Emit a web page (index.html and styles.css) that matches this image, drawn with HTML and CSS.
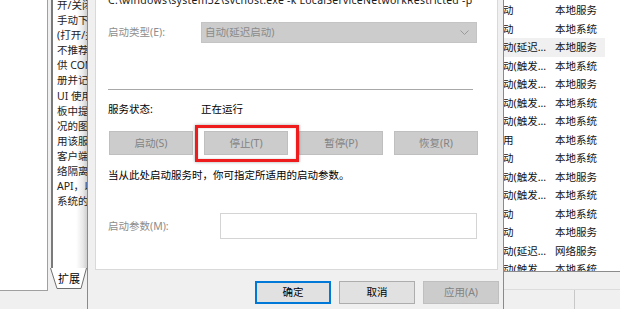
FILE: index.html
```html
<!DOCTYPE html>
<html lang="zh-CN">
<head>
<meta charset="utf-8">
<title>服务属性</title>
<link rel="stylesheet" href="styles.css">
</head>
<body>
<div class="screen">
  <div class="mmc-left">
    <div class="tree"></div>
    <div class="desc-col">
      <div class="desc">
        <div>开/关闭</div>
        <div>手动下载</div>
        <div>(打开/关</div>
        <div>不推荐</div>
        <div>供 COM</div>
        <div>册并记录</div>
        <div>UI 使用</div>
        <div>板中提示</div>
        <div>况的图标</div>
        <div>用该服务</div>
        <div>客户端</div>
        <div>络隔离</div>
        <div>API，以</div>
        <div>系统的</div>
      </div>
      <div class="tab">
        <svg class="tab-shape" width="37" height="21" viewBox="0 0 37 21"><path d="M0.5 0 L7 20.5 L31 20.5 L36.5 0" fill="#fff" stroke="#6e6e6e" stroke-width="1"/></svg>
        <span class="tab-label">扩展</span>
      </div>
    </div>
  </div>

  <div class="dialog">
    <div class="page">
      <div class="path">C:\windows\system32\svchost.exe -k LocalServiceNetworkRestricted -p</div>
      <div class="row row-type">
        <span class="label muted">启动类型(E):</span>
        <div class="combo">
          <span>自动(延迟启动)</span>
          <svg class="chev" width="9" height="5" viewBox="0 0 9 5"><path d="M0.5 0.5 L4.5 4.5 L8.5 0.5" fill="none" stroke="#9a9a9a" stroke-width="1"/></svg>
        </div>
      </div>
      <div class="sep"></div>
      <div class="row row-status">
        <span class="label">服务状态:</span>
        <span>正在运行</span>
      </div>
      <div class="svc-buttons">
        <button class="btn disabled">启动(S)</button>
        <button class="btn disabled highlight">停止(T)<span class="redbox"></span></button>
        <button class="btn disabled">暂停(P)</button>
        <button class="btn disabled">恢复(R)</button>
      </div>
      <div class="hint">当从此处启动服务时，你可指定所适用的启动参数。</div>
      <div class="row row-param">
        <span class="label label-param muted">启动参数(M):</span>
        <div class="input"></div>
      </div>
    </div>
    <div class="dlg-buttons">
      <button class="btn default">确定</button>
      <button class="btn normal">取消</button>
      <button class="btn disabled">应用(A)</button>
    </div>
  </div>

  <div class="list-area">
    <div class="list">
      <div class="lrow"><span class="c1">动</span><span class="c2">本地服务</span></div>
      <div class="lrow"><span class="c1">动</span><span class="c2">本地系统</span></div>
      <div class="lrow sel"><span class="c1">动(延迟...</span><span class="c2">本地服务</span></div>
      <div class="lrow"><span class="c1">动(触发...</span><span class="c2">本地系统</span></div>
      <div class="lrow"><span class="c1">动(触发...</span><span class="c2">本地服务</span></div>
      <div class="lrow"><span class="c1">动(触发...</span><span class="c2">本地系统</span></div>
      <div class="lrow"><span class="c1">动(触发...</span><span class="c2">本地系统</span></div>
      <div class="lrow"><span class="c1">用</span><span class="c2">本地系统</span></div>
      <div class="lrow"><span class="c1">动</span><span class="c2">本地系统</span></div>
      <div class="lrow"><span class="c1">动(触发...</span><span class="c2">本地服务</span></div>
      <div class="lrow"><span class="c1">动(触发...</span><span class="c2">本地系统</span></div>
      <div class="lrow"><span class="c1">动</span><span class="c2">本地系统</span></div>
      <div class="lrow"><span class="c1">动</span><span class="c2">本地服务</span></div>
      <div class="lrow"><span class="c1">动(延迟...</span><span class="c2">网络服务</span></div>
      <div class="lrow"><span class="c1">动(触发...</span><span class="c2">本地系统</span></div>
    </div>
    <div class="list-tabs"></div>
    <div class="status">
      <div class="status-cell"></div>
      <div class="status-cell"></div>
    </div>
  </div>
</div>
</body>
</html>
```

FILE: styles.css
```css
* { box-sizing: border-box; }
html, body { margin: 0; padding: 0; }
body {
  width: 620px;
  height: 309px;
  overflow: hidden;
  background: #f0f0f0;
  font-family: "Noto Sans", "Noto Sans CJK SC", sans-serif;
  font-size: 10.5px;
  line-height: 15px;
  color: #1a1a1a;
}
.screen {
  display: flex;
  width: 620px;
  height: 309px;
  overflow: hidden;
}

/* ---------- left MMC part ---------- */
.mmc-left {
  width: 87px;
  flex: none;
  display: flex;
  align-items: flex-start;
  background: #f0f0f0;
}
.tree {
  width: 48px;
  height: 291px;
  background: #fff;
  border-right: 1px solid #a0a0a0;
  border-bottom: 1px solid #a0a0a0;
  flex: none;
}
.desc-col {
  margin-left: 3px;
  width: 36px;
  flex: none;
}
.desc {
  height: 270px;
  border-left: 2px solid #7a7a7a;
  background: linear-gradient(to right, #fff 0, #fff 68%, #e9e9e9 88%, #cfcfcf 100%);
  padding: 0 0 0 4px;
  overflow: hidden;
  white-space: nowrap;
  line-height: 15.1px;
  margin-top: -2px;
  color: #222;
}
.tab {
  position: relative;
  height: 21px;
  width: 37px;
  margin-left: -1px;
}
.tab-shape { position: absolute; left: 0; top: 0; }
.tab-label {
  position: relative;
  display: block;
  padding-left: 8px;
  line-height: 21px;
  font-size: 11px;
  color: #000;
}

/* ---------- dialog ---------- */
.dialog {
  width: 417px;
  flex: none;
  height: 309px;
  background: #f0f0f0;
  border-left: 1px solid #8a8a8a;
  border-right: 1px solid #8a8a8a;
  padding: 0 4px 0 7px;
}
.page {
  margin-top: -11px;
  width: 403px;
  background: #fff;
  border: 1px solid #d9d9d9;
  padding: 3px 0 30px 12px;
}
.path {
  line-height: 15px;
  white-space: nowrap;
  letter-spacing: 0.25px;
  color: #1a1a1a;
}
.row {
  display: flex;
  align-items: center;
}
.label {
  width: 93px;
  flex: none;
  white-space: nowrap;
}
.muted { color: #8d8d8d; }
.row-type { margin-top: 14px; height: 21px; }
.combo {
  width: 276px;
  height: 21px;
  background: #cccccc;
  border: 1px solid #c4c4c4;
  color: #8a8a8a;
  display: flex;
  align-items: center;
  justify-content: space-between;
  padding: 0 7px 0 3px;
  line-height: 19px;
}
.chev { display: block; }
.sep {
  margin-top: 46px;
  width: 365px;
  height: 1px;
  background: #a8a8a8;
}
.row-status { margin-top: 11px; height: 16px; line-height: 16px; color: #000; }

.svc-buttons {
  margin-top: 14px;
  width: 369px;
  margin-left: 1px;
  display: flex;
  justify-content: space-between;
}
.btn {
  font-family: inherit;
  font-size: 10.5px;
  line-height: 15px;
  padding: 0;
  margin: 0;
  border: 1px solid #adadad;
  background: #e1e1e1;
  color: #000;
}
.svc-buttons .btn { width: 84px; height: 24px; }
.btn.disabled {
  background: #cccccc;
  border-color: #bfbfbf;
  color: #838383;
}
.highlight { position: relative; }
.redbox {
  position: absolute;
  left: -10px;
  right: -12px;
  top: -7px;
  bottom: -8px;
  border: 3px solid #ee1c1c;
  box-shadow: 0 0 3px rgba(0,0,0,0.35), inset 0 0 2px rgba(0,0,0,0.25);
  pointer-events: none;
}
.hint {
  margin-top: 13px;
  line-height: 15px;
  color: #000;
  white-space: nowrap;
}
.row-param { margin-top: 30px; height: 26px; }
.label-param { width: 112px; }
.input {
  width: 257px;
  height: 26px;
  background: #fff;
  border: 1px solid #d4d4d4;
}

.dlg-buttons {
  margin-top: 11px;
  display: flex;
  justify-content: flex-end;
  gap: 8px;
}
.dlg-buttons .btn { width: 76px; height: 23px; }
.btn.default {
  border: 1px solid #0078d7;
  box-shadow: inset 0 0 0 1px #0078d7;
}
.btn.normal { border-color: #adadad; }

/* ---------- right list ---------- */
.list-area {
  flex: 1;
  height: 309px;
  display: flex;
  flex-direction: column;
  background: #f0f0f0;
}
.list {
  height: 272px;
  background: #fff;
  border-bottom: 1px solid #8c8c8c;
  padding-top: 1px;
  overflow: hidden;
}
.lrow {
  display: flex;
  height: 18.5px;
  line-height: 18.5px;
  white-space: nowrap;
  width: 101px;
  color: #111;
}
.lrow.sel { background: #f0f0f0; }
.c1 { width: 52px; flex: none; overflow: hidden; margin-left: -1px; }
.c2 { flex: none; }
.list-tabs { height: 18px; border-bottom: 1px solid #dcdcdc; }
.status {
  flex: 1;
  display: flex;
}
.status-cell:first-child { width: 71px; border-right: 1px solid #c8c8c8; }
.status-cell:last-child { flex: 1; }
```
